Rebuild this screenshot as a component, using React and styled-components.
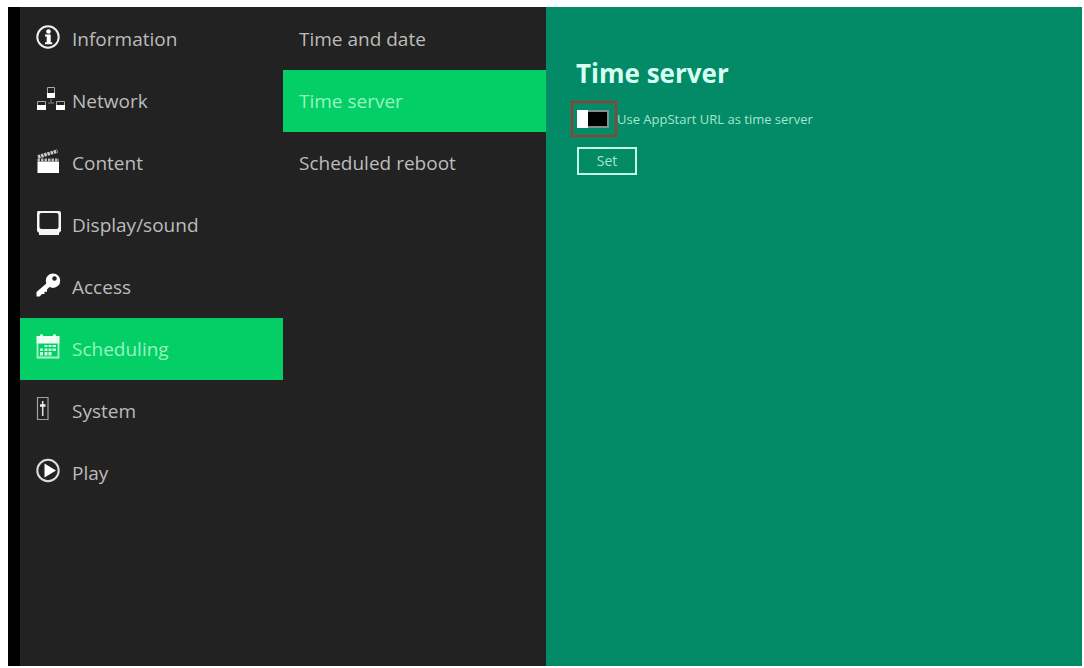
import React, { useState } from "react";
import styled, { createGlobalStyle } from "styled-components";

const GlobalStyle = createGlobalStyle`
  *, *::before, *::after { box-sizing: border-box; }
  body {
    margin: 0;
    background: #fff;
    font-family: "Open Sans", "Noto Sans", sans-serif;
  }
`;

const Screen = styled.div`
  display: flex;
  min-height: calc(100vh - 9px);
  margin: 7px 2px 2px 8px;
  background: #222;
  border-left: 12px solid #000;
`;

const Menu = styled.nav`
  flex: 0 0 auto;
  width: 25%;
  max-width: 263px;
  padding-top: 1px;
`;

const MenuList = styled.ul`
  list-style: none;
  margin: 0;
  padding: 0;
`;

const MenuLink = styled.a`
  display: flex;
  align-items: center;
  height: 62px;
  padding-left: 16px;
  color: ${(p) => (p.$active ? "#96f5bf" : "#bcbcbc")};
  background: ${(p) => (p.$active ? "#04cf67" : "transparent")};
  font-size: 19px;
  font-weight: 400;
  line-height: 26px;
  text-decoration: none;
  white-space: nowrap;
`;

const IconSlot = styled.span`
  flex: 0 0 36px;
  height: 32px;
  svg { display: block; }
`;

const Panel = styled.main`
  flex: 1;
  padding: 50px 30px;
  background: #038a66;
  color: #d5fff0;
`;

const Title = styled.h1`
  margin: 0;
  font-size: 26px;
  line-height: 32px;
  font-weight: 700;
`;

const Field = styled.label`
  display: flex;
  align-items: center;
  height: 36px;
  margin: 12px 0 10px -5px;
  color: #a5e6cf;
  font-size: 13px;
  font-weight: 400;
`;

const Highlight = styled.span`
  display: flex;
  align-items: center;
  width: 46px;
  height: 36px;
  padding-left: 4px;
  border: 2px solid #a8352f;
`;

const Toggle = styled.input`
  appearance: none;
  position: relative;
  width: 32px;
  height: 18px;
  margin: 0;
  border: 2px solid #83918c;
  background: #000;
  cursor: pointer;
  &::before {
    content: "";
    position: absolute;
    top: -2px;
    bottom: -2px;
    width: 11px;
    background: #fff;
    ${(p) => (p.checked ? "right: -2px;" : "left: -2px;")}
  }
`;

const SetButton = styled.button`
  display: block;
  width: 60px;
  height: 28px;
  margin-left: 1px;
  padding: 0;
  border: 2px solid #c5fae6;
  background: transparent;
  color: #a5e6cf;
  font: 400 14px/20px "Open Sans", "Noto Sans", sans-serif;
`;

const Icon = ({ children }) => (
  <svg width="32" height="32" viewBox="0 0 32 32" fill="none" stroke="none" aria-hidden="true">
    {children}
  </svg>
);

const icons = {
  info: (
    <Icon>
      <circle cx="12" cy="14" r="10.7" stroke="#eee" strokeWidth="2" />
      <circle cx="12.5" cy="8.500" r="2.300" fill="#fff" />
      <path d="M9 11.500h5.700v7.800h1.500v2H9v-2h1.700v-5.800H9z" fill="#fff" />
    </Icon>
  ),
  network: (
    <Icon>
      <path d="M15 14v3M12 18h6" stroke="#888" />
      <path d="M11.500 2.500h7v10h-7zM1.500 16.500h8v8h-8zM20.500 16.500h8v8h-8z" stroke="#aaa" />
      <path d="M11 8h8v5h-8zM1 20h9v5H1zM20 20h9v5h-9z" fill="#fff" />
    </Icon>
  ),
  content: (
    <Icon>
      <path d="M1.500 14.500h21.500V26h-21.500z" fill="#fff" />
      <path d="M2 10L21.500 4" stroke="#ccc" strokeWidth="3.600" strokeDasharray="2.500 .8" />
      <path d="M1.500 13h21.500" stroke="#bbb" strokeWidth="3" strokeDasharray="2.500 1" />
    </Icon>
  ),
  display: (
    <Icon>
      <path
        fillRule="evenodd"
        fill="#f4f4f4"
        d="M2 2h21q2 0 2 2v18l-2 2v2H3v-2l-2-2V4q0-2 1-2zM5 4q-1.500 0-1.500 2v12q0 2 2 2h15q2 0 2-2V6q0-2-2-2z"
      />
    </Icon>
  ),
  key: (
    <Icon>
      <path
        fillRule="evenodd"
        fill="#fff"
        d="M17 2.500a7.200 7.200 0 0 1 0 14.400q-2 0-3.500-.8L11 18.500v2.200H8.500V23H6l-2.500 2.500H.5V21l9.800-8.500Q9.800 11 9.800 9.700A7.200 7.200 0 0 1 17 2.500zM18.500 5.200a2.300 2.300 0 1 0 0 4.600 2.300 2.300 0 0 0 0-4.600z"
      />
    </Icon>
  ),
  calendar: (
    <Icon>
      <path d="M.5 3H4V1.500h3V3h10V1.500h3V3h3.500v7.500H.5z" fill="#effff5" />
      <path d="M1.500 9.500V24.500h21V9.500" stroke="#a9f5ca" strokeWidth="1.800" />
      <path
        d="M8.500 12h3v2h-3zM12.500 12h3v2h-3zM16.500 12h3.500v2h-3.500zM4 15.500h3v2.500H4zM8.500 15.500h3v2.500h-3zM12.500 15.500h3v2.500h-3zM16.500 15.500h3.500v2.500h-3.500zM4 19h3v3.500H4zM8.500 19h3v3.500h-3zM12.500 19h3v3.500h-3z"
        fill="#c9ffe0"
      />
    </Icon>
  ),
  system: (
    <Icon>
      <path d="M1.500 2.500h10.500v22H1.500z" stroke="#a0a0a0" strokeWidth="1.200" />
      <path d="M6.700 6v15" stroke="#ddd" strokeWidth="1.600" />
      <path d="M4 10.500h5.500" stroke="#eee" strokeWidth="2.500" />
    </Icon>
  ),
  play: (
    <Icon>
      <circle cx="12" cy="13.500" r="10.700" stroke="#ddd" strokeWidth="2" />
      <path d="M8.500 6.500L20 13.500 8.500 20.500z" fill="#fff" />
    </Icon>
  ),
};

const sections = [
  ["Information", "info"],
  ["Network", "network"],
  ["Content", "content"],
  ["Display/sound", "display"],
  ["Access", "key"],
  ["Scheduling", "calendar"],
  ["System", "system"],
  ["Play", "play"],
];

const pages = ["Time and date", "Time server", "Scheduled reboot"];

export default function App() {
  const [useAppStart, setUseAppStart] = useState(false);
  return (
    <>
      <GlobalStyle />
      <Screen>
        <Menu aria-label="Sections">
          <MenuList>
            {sections.map(([name, icon]) => (
              <li key={name}>
                <MenuLink href="#" $active={name === "Scheduling"}>
                  <IconSlot>{icons[icon]}</IconSlot>
                  {name}
                </MenuLink>
              </li>
            ))}
          </MenuList>
        </Menu>
        <Menu aria-label="Scheduling pages">
          <MenuList>
            {pages.map((name) => (
              <li key={name}>
                <MenuLink href="#" $active={name === "Time server"}>
                  {name}
                </MenuLink>
              </li>
            ))}
          </MenuList>
        </Menu>
        <Panel>
          <Title>Time server</Title>
          <Field>
            <Highlight>
              <Toggle
                type="checkbox"
                checked={useAppStart}
                onChange={(e) => setUseAppStart(e.target.checked)}
              />
            </Highlight>
            Use AppStart URL as time server
          </Field>
          <SetButton type="button">Set</SetButton>
        </Panel>
      </Screen>
    </>
  );
}
